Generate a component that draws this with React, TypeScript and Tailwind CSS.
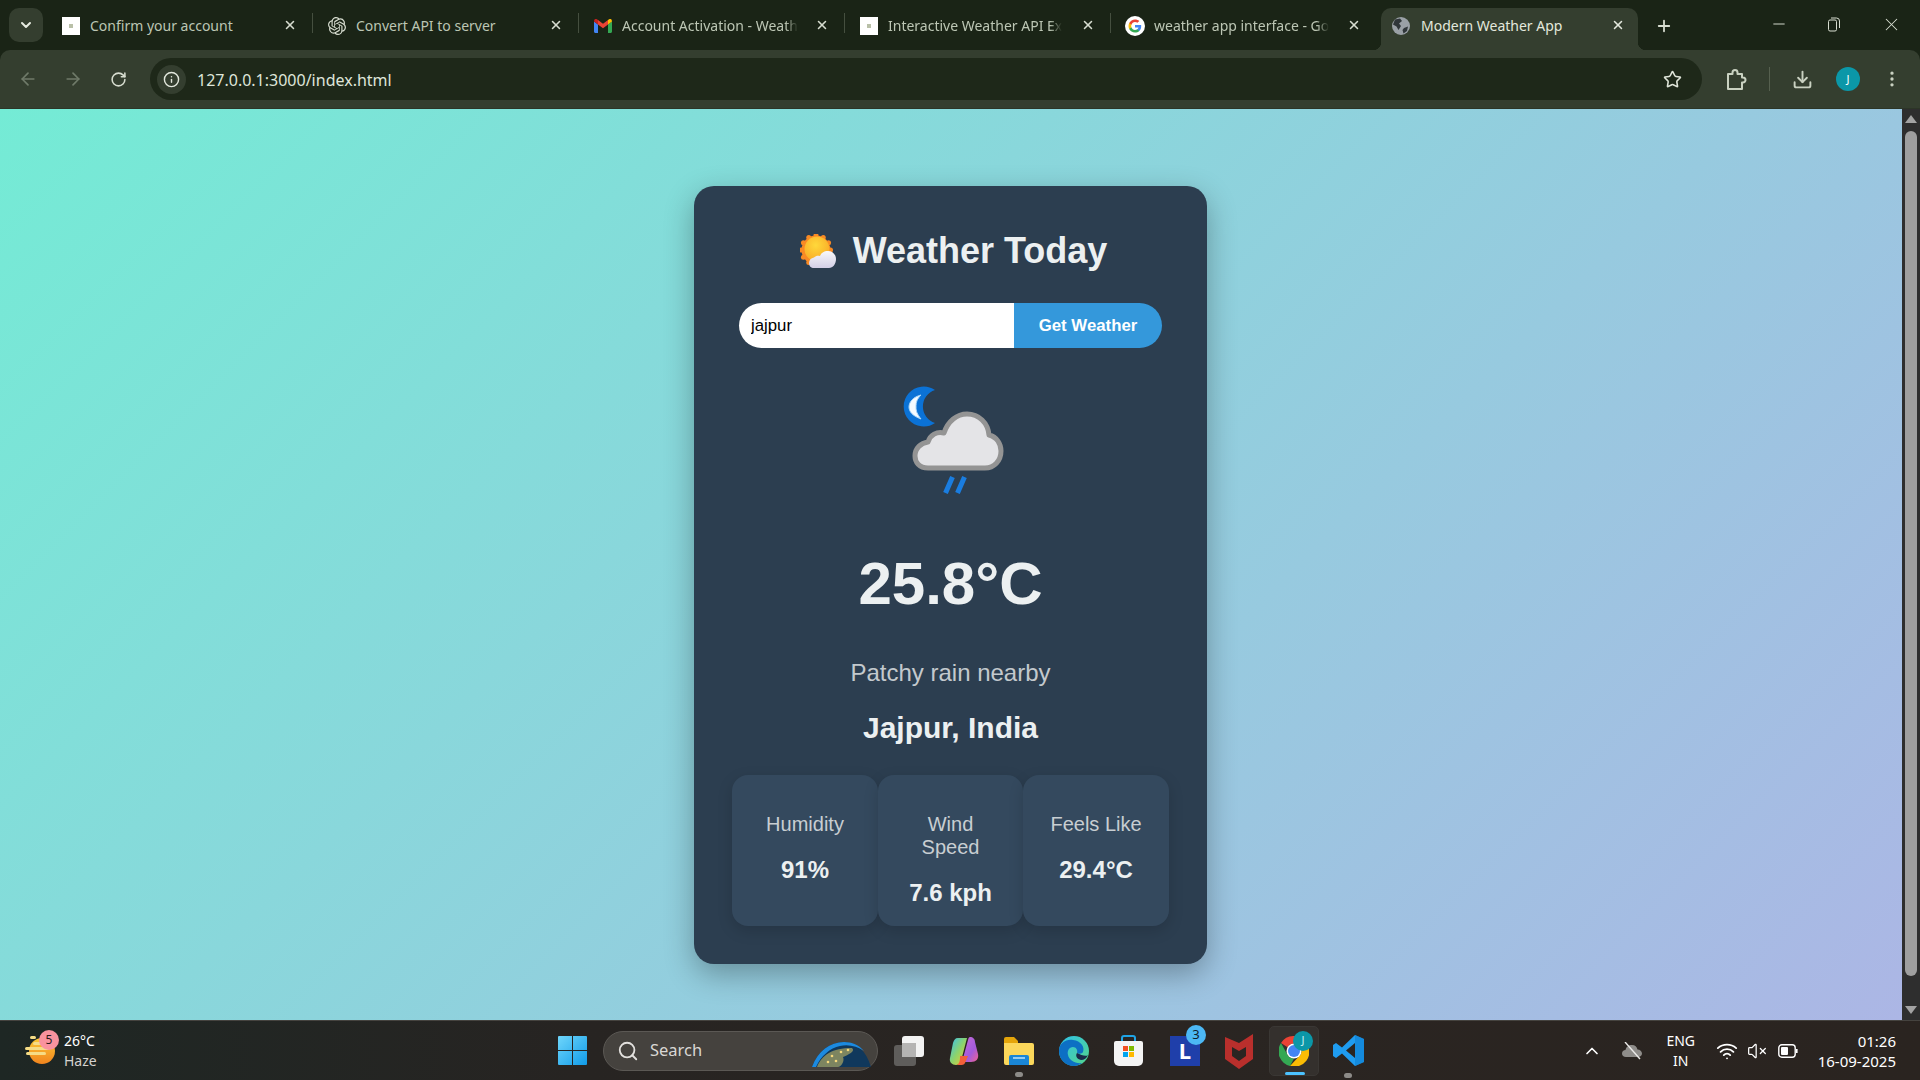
import { ArrowLeft, ArrowRight, ChevronDown, ChevronUp, Download, Info, Minus, MoreVertical, Plus, RotateCw, Search, Star, VolumeX, Wifi, X } from 'lucide-react';
import { SiOpenai } from 'react-icons/si';

const uiFont = "font-['Noto_Sans',sans-serif]";

function BlankFavicon() {
  return (
    <div className="flex h-[18px] w-[18px] items-center justify-center bg-white">
      <div className="h-1 w-1 bg-[#b9c0a8]" />
    </div>
  );
}

function GmailIcon() {
  return (
    <svg width="18" height="14" viewBox="0 0 18 14">
      <path d="M0 2.5V12.5C0 13.3 .6 14 1.5 14H4V5.5Z" fill="#4285f4" />
      <path d="M14 5.5V14H16.5C17.4 14 18 13.3 18 12.5V2.5Z" fill="#34a853" />
      <path d="M0 2.5 4 5.5V1L2.5 0C1 -.5 0 .8 0 2.5Z" fill="#c5221f" />
      <path d="M4 1V5.5L9 9.3 14 5.5V1L9 4.8Z" fill="#ea4335" />
      <path d="M14 1V5.5L18 2.5C18 .8 17 -.5 15.5 0Z" fill="#fbbc04" />
    </svg>
  );
}

function GoogleIcon() {
  return (
    <svg width="20" height="20" viewBox="0 0 20 20">
      <circle cx="10" cy="10" r="10" fill="#fff" />
      <path d="M16.2 10.2c0-.5 0-.9-.1-1.300H10v2.500h3.500c-.2.800-.6 1.500-1.300 1.900v1.600h2.100c1.200-1.100 1.900-2.800 1.900-4.700Z" fill="#4285f4" />
      <path d="M10 16.500c1.800 0 3.200-.6 4.300-1.600l-2.100-1.600c-.6.400-1.300.6-2.200.6-1.700 0-3.100-1.100-3.600-2.700H4.200v1.700c1.100 2.100 3.300 3.600 5.800 3.600Z" fill="#34a853" />
      <path d="M6.400 11.200c-.3-.8-.3-1.600 0-2.400V7.100H4.200c-.9 1.800-.9 4 0 5.800Z" fill="#fbbc05" />
      <path d="M10 5.900c.9 0 1.800.3 2.400.9l1.900-1.900C13.200 3.900 11.700 3.400 10 3.400c-2.500 0-4.700 1.500-5.800 3.700l2.200 1.700C6.900 7.100 8.300 5.900 10 5.900Z" fill="#ea4335" />
    </svg>
  );
}

function GlobeFavicon() {
  return (
    <svg width="18" height="18" viewBox="0 0 18 18">
      <circle cx="9" cy="9" r="9" fill="#9aa0a6" />
      <path d="M3 2.500 8 1.500 10 4 7 6.500 9 9 6.500 13 4.500 9.500 1 7.500ZM12 11 16 9.500 15 14 11.500 16.500 10.500 13Z" fill="#30363a" />
    </svg>
  );
}

function ExtensionIcon() {
  return (
    <svg width="21" height="24" viewBox="0 0 21 24" fill="none" stroke="#c9d1c1" strokeWidth="2" strokeLinejoin="round">
      <path d="M2 7H6.500V5.500a2.500 2.500 0 0 1 5 0V7H16V10.500H17a2.500 2.500 0 0 1 0 5H16V22H2Z" />
    </svg>
  );
}

const tabs = [
  { title: 'Confirm your account', icon: <BlankFavicon /> },
  { title: 'Convert API to server', icon: <SiOpenai className="text-[18px] text-[#d6dccf]" /> },
  { title: 'Account Activation - Weath', icon: <GmailIcon />, fade: true },
  { title: 'Interactive Weather API Ex', icon: <BlankFavicon />, fade: true },
  { title: 'weather app interface - Go', icon: <GoogleIcon />, fade: true },
];

function TabStrip() {
  return (
    <div className={`flex h-[50px] items-end bg-[#1a2416] ${uiFont}`}>
      <div className="flex h-[50px] w-[48px] shrink-0 items-start pl-[9px] pt-[8px]">
        <div className="flex h-[34px] w-[34px] items-center justify-center rounded-[10px] bg-[#343e2f]">
          <ChevronDown size={16} strokeWidth={3} className="text-[#e6ebe0]" />
        </div>
      </div>
      {tabs.map((tab, i) => (
        <div key={tab.title} className="relative flex h-[42px] w-[266px] shrink-0 items-center pb-[7px] pl-[13px]">
          <div className="flex w-[20px] shrink-0 justify-center">{tab.icon}</div>
          <span className={`ml-[9px] whitespace-nowrap text-[14px] text-[#bcc6b4] ${tab.fade ? '[mask-image:linear-gradient(90deg,#000_93%,transparent)]' : ''}`}>
            {tab.title}
          </span>
          <X size={14} strokeWidth={2.6} className="absolute right-[17px] top-[10px] text-[#d7ddd0]" />
          {i < 4 && <div className="absolute right-[1px] top-[5px] h-[20px] w-px bg-[#454f3f]" />}
        </div>
      ))}
      <div className="relative ml-[3px] flex h-[42px] w-[257px] shrink-0 items-center rounded-t-[10px] bg-[#343e2f] pb-[7px] pl-[11px]">
        <div className="absolute bottom-0 left-[-8px] h-2 w-2 bg-[radial-gradient(circle_at_0_0,transparent_8px,#343e2f_8.500px)]" />
        <div className="absolute bottom-0 right-[-8px] h-2 w-2 bg-[radial-gradient(circle_at_100%_0,transparent_8px,#343e2f_8.500px)]" />
        <GlobeFavicon />
        <span className="ml-[11px] whitespace-nowrap text-[14px] text-[#e3e8dd]">Modern Weather App</span>
        <X size={14} strokeWidth={2.6} className="absolute right-[13px] top-[10px] text-[#e3e8dd]" />
      </div>
      <div className="ml-[17px] flex h-[42px] items-center pb-[7px]">
        <Plus size={18} strokeWidth={2.4} className="text-[#d7ddd0]" />
      </div>
      <div className="ml-auto flex h-[50px] items-center pb-[2px] pr-[4px] text-[#d7ddd0]">
        <div className="flex w-[50px] justify-center"><Minus size={18} strokeWidth={1.300} /></div>
        <div className="flex w-[50px] justify-center pl-[10px]">
          <svg width="14" height="15" viewBox="0 0 14 15" fill="none" stroke="currentColor" strokeWidth="1">
            <rect x="1.500" y="3" width="8" height="11" rx="1.500" />
            <path d="M4 1h5.500a3 3 0 0 1 3 3V11" />
          </svg>
        </div>
        <div className="flex w-[62px] justify-center pl-[12px]"><X size={21} strokeWidth={1.200} /></div>
      </div>
    </div>
  );
}

function Toolbar() {
  return (
    <div className={`flex h-[58px] items-center rounded-t-[10px] bg-[#343e2f] ${uiFont}`}>
      <div className="flex w-[150px] shrink-0 items-center pl-[18px]">
        <ArrowLeft size={20} className="text-[#6f7a69]" />
        <ArrowRight size={20} className="ml-[25px] text-[#6f7a69]" />
        <RotateCw size={17} strokeWidth={2.2} className="ml-[27px] text-[#d7ddd0]" />
      </div>
      <div className="flex h-[42px] w-[1552px] shrink-0 items-center rounded-full bg-[#1e2819] pl-[7px] pr-[20px]">
        <div className="flex h-[29px] w-[29px] items-center justify-center rounded-full bg-[#343e2f]">
          <Info size={17} className="text-[#e3e8dd]" />
        </div>
        <span className="ml-[11px] pt-[2px] text-[16px] text-[#dfe5d9]">127.0.0.1:3000/index.html</span>
        <Star size={19} strokeWidth={2} className="ml-auto text-[#dfe5d9]" />
      </div>
      <div className="ml-[24px]"><ExtensionIcon /></div>
      <div className="ml-[22px] h-[24px] w-px bg-[#56604f]" />
      <Download size={21} strokeWidth={2.2} className="ml-[22px] text-[#c9d1c1]" />
      <div className="ml-[23px] flex h-[24px] w-[24px] items-center justify-center rounded-full bg-[#0b97a8] text-[11px] text-white">J</div>
      <MoreVertical size={20} className="ml-[22px] text-[#c9d1c1]" />
    </div>
  );
}

const sunBumps = Array.from({ length: 12 }, (_, i) => {
  const a = (i * Math.PI) / 6;
  return { x: 16 + 14.5 * Math.cos(a), y: 16 + 14.5 * Math.sin(a) };
});

function SunCloudEmoji() {
  return (
    <svg width="37" height="35" viewBox="0 0 37 35">
      <defs>
        <radialGradient id="sunFill" cx="0.45" cy="0.35" r="0.7">
          <stop offset="0" stopColor="#ffd83b" />
          <stop offset="1" stopColor="#f9a825" />
        </radialGradient>
        <linearGradient id="cloudFill" x1="0" y1="0" x2="0" y2="1">
          <stop offset="0" stopColor="#f8f8fa" />
          <stop offset="1" stopColor="#d3cfe6" />
        </linearGradient>
      </defs>
      <circle cx="16" cy="16" r="14.500" fill="#f98a24" />
      {sunBumps.map(b => (
        <circle key={b.x + '-' + b.y} cx={b.x} cy={b.y} r="2.500" fill="#f98a24" />
      ))}
      <circle cx="17" cy="15" r="12.500" fill="url(#sunFill)" />
      <path d="M14 34C11 34 9 32 9 29 9 26 11 24 14 23.500 16 21.500 18 21.500 20 22 21 19 24 17 28 17 32 17 36 20 36 25 36 30 33 34 29 34Z" fill="url(#cloudFill)" />
    </svg>
  );
}

function WeatherIcon() {
  return (
    <svg width="120" height="120" viewBox="0 0 120 120" className="blur-[0.5px]">
      <path d="M44 10A20 20 0 1 0 44 43 17.300 17.300 0 0 1 44 10Z" fill="#0b72d6" />
      <path d="M30 15C22 17 18 22 18 27 18 32 22 36 30 39 26 34 25 31 25 27 25 22 26 19 30 15Z" fill="#f6fbff" stroke="#a9d6fa" strokeWidth="1" />
      <path d="M37 88C28 88 24 82 24 76 24 68 30 63 37 62 39 55 46 51 53 53 57 41 66 34 76 34 88 34 97 43 98 55 106 57 110 64 110 71 110 81 103 88 94 88Z" fill="#e4e4e7" stroke="#949494" strokeWidth="5" strokeLinejoin="round" />
      <path d="M54.500 113 61.500 97M66.500 113 73.500 97" stroke="#1a7de0" strokeWidth="5" />
    </svg>
  );
}

const stats = [
  { label: 'Humidity', value: '91%', width: 'w-[146px]' },
  { label: 'Wind Speed', value: '7.6 kph', width: 'w-[145px]' },
  { label: 'Feels Like', value: '29.4°C', width: 'w-[146px]' },
];

function WeatherCard() {
  return (
    <div className="h-[778px] w-[513px] rounded-[20px] bg-[#2c3e50] px-[45px] pt-[44px] text-center font-['Liberation_Sans',sans-serif] text-[#ecf0f1] shadow-[0_10px_30px_rgba(0,0,0,0.3)]">
      <h1 className="flex h-[42px] items-center justify-center gap-[16px] pl-[6px] text-[36px] font-bold leading-[42px]">
        <SunCloudEmoji />
        <span>Weather Today</span>
      </h1>
      <div className="mt-[31px] flex h-[45px]">
        <input
          readOnly
          value="jajpur"
          className="min-w-0 flex-1 rounded-l-full bg-white px-[12px] text-[16.800px] text-black outline-none"
        />
        <button type="button" className="w-[148px] rounded-r-full bg-[#3498db] text-[16.800px] font-bold text-white">
          Get Weather
        </button>
      </div>
      <div className="mt-[32px] flex justify-center">
        <WeatherIcon />
      </div>
      <div className="mt-[49px] text-[60px] font-bold leading-[70px]">25.8°C</div>
      <div className="mt-[40px] text-[24px] leading-[28px] text-[#c3c9cd]">Patchy rain nearby</div>
      <div className="mt-[24px] text-[30px] font-bold leading-[33px]">Jajpur, India</div>
      <div className="mx-[-7px] mt-[31px] flex h-[151px]">
        {stats.map(stat => (
          <div key={stat.label} className={`rounded-[16px] bg-[#34495e] px-[20px] pt-[38px] shadow-[0_5px_15px_rgba(0,0,0,0.15)] ${stat.width}`}>
            <div className="text-[20px] leading-[23px] text-[#c8ced2]">{stat.label}</div>
            <div className="mt-[20px] text-[24px] font-bold leading-[28px]">{stat.value}</div>
          </div>
        ))}
      </div>
    </div>
  );
}

function Scrollbar() {
  return (
    <div className="flex w-[18px] shrink-0 flex-col items-center bg-[#2e2e2e] pt-[6px] pb-[6px]">
      <div className="h-0 w-0 border-x-[6px] border-b-[8px] border-x-transparent border-b-[#a3a3a3]" />
      <div className="mb-[30px] mt-[8px] w-[12px] flex-1 rounded-full bg-[#9f9f9f]" />
      <div className="h-0 w-0 border-x-[6px] border-t-[8px] border-x-transparent border-t-[#a3a3a3]" />
    </div>
  );
}

function WindowsLogo() {
  return (
    <svg width="29" height="29" viewBox="0 0 29 29">
      <defs>
        <linearGradient id="winFill" x1="0" y1="0" x2="1" y2="1">
          <stop offset="0" stopColor="#6fd6fb" />
          <stop offset="1" stopColor="#119be8" />
        </linearGradient>
      </defs>
      <path d="M1 0H14V14H0V1a1 1 0 0 1 1-1ZM15 0H28a1 1 0 0 1 1 1V14H15ZM0 15H14V29H1a1 1 0 0 1-1-1ZM15 15H29V28a1 1 0 0 1-1 1H15Z" fill="url(#winFill)" />
    </svg>
  );
}

function CopilotIcon() {
  return (
    <svg width="30" height="30" viewBox="0 0 30 30">
      <defs>
        <linearGradient id="copA" x1="0" y1="0" x2="1" y2="1">
          <stop offset="0" stopColor="#35c1f1" />
          <stop offset="0.5" stopColor="#8ed36a" />
          <stop offset="1" stopColor="#f7c92f" />
        </linearGradient>
        <linearGradient id="copB" x1="0" y1="0" x2="1" y2="1">
          <stop offset="0" stopColor="#c86dd7" />
          <stop offset="0.6" stopColor="#a35bdc" />
          <stop offset="1" stopColor="#f06292" />
        </linearGradient>
      </defs>
      <path d="M9 2H18L12 25C11 28 9 29 7 29 3 29 0 26 1 22L4 7C5 4 6 2 9 2Z" fill="url(#copA)" />
      <path d="M21 1C24 1 26 3 26 6L29 18C30 23 27 26 22 26H13L19 4C19.500 2 20 1 21 1Z" fill="url(#copB)" />
      <path d="M11 20H19L16 27C15 29 13 29 11 29H8C11 27 11 24 11 20Z" fill="#f2603a" />
    </svg>
  );
}

function FolderIcon() {
  return (
    <svg width="30" height="28" viewBox="0 0 30 28">
      <path d="M0 2a2 2 0 0 1 2-2H10L14 4V8H0Z" fill="#e5a50a" />
      <path d="M0 6H28a2 2 0 0 1 2 2V26a2 2 0 0 1-2 2H2a2 2 0 0 1-2-2Z" fill="#fbd75b" />
      <path d="M5 28V20a2 2 0 0 1 2-2H23a2 2 0 0 1 2 2V28Z" fill="#1a86d6" />
      <path d="M9 21H21" stroke="#bfe3fb" strokeWidth="1.500" />
    </svg>
  );
}

function EdgeIcon() {
  return (
    <svg width="30" height="30" viewBox="0 0 30 30">
      <defs>
        <linearGradient id="edgeA" x1="0" y1="0" x2="1" y2="1">
          <stop offset="0" stopColor="#2fc2e8" />
          <stop offset="1" stopColor="#54d48a" />
        </linearGradient>
      </defs>
      <circle cx="15" cy="15" r="15" fill="url(#edgeA)" />
      <path d="M0 15C0 7 7 3 14 4 22 5 26 11 24 16 23 18 20 18 18 17 19 14 17 11 14 11 10 11 8 15 9 19 10 24 16 28 23 27 20 29 18 30 15 30 6 30 0 23 0 15Z" fill="#0d6fc4" />
      <path d="M18 17C16 20 18 23 22 24 25 24 28 22 29 19 27 21 22 19 18 17Z" fill="#1a2a4a" />
    </svg>
  );
}

function StoreIcon() {
  return (
    <svg width="29" height="31" viewBox="0 0 29 31">
      <path d="M8 7V3a2 2 0 0 1 2-2H19a2 2 0 0 1 2 2V7" fill="none" stroke="#1fa4e6" strokeWidth="2" />
      <path d="M2 6H27a2 2 0 0 1 2 2V26a5 5 0 0 1-5 5H5a5 5 0 0 1-5-5V8a2 2 0 0 1 2-2Z" fill="#f4f4f4" />
      <rect x="9" y="11" width="5" height="5" fill="#f25022" />
      <rect x="15" y="11" width="5" height="5" fill="#7fba00" />
      <rect x="9" y="17" width="5" height="5" fill="#00a4ef" />
      <rect x="15" y="17" width="5" height="5" fill="#ffb900" />
    </svg>
  );
}

function McAfeeIcon() {
  return (
    <svg width="28" height="36" viewBox="0 0 28 36">
      <path d="M0 4 14 10 28 1V26L14 36 0 26ZM7 14 14 18 21 14V23L14 28 7 23Z" fill="#b92f2c" fillRule="evenodd" />
    </svg>
  );
}

function ChromeIcon() {
  return (
    <svg width="30" height="30" viewBox="0 0 30 30">
      <path d="M15 0A15 15 0 0 1 28 7.500H15A7.500 7.500 0 0 0 8.500 11.300L2 7A15 15 0 0 1 15 0Z" fill="#ea4335" />
      <path d="M2 7 8.500 18.700A7.500 7.500 0 0 0 15 22.500L11 30A15 15 0 0 1 2 7Z" fill="#34a853" />
      <path d="M28 7.500A15 15 0 0 1 11 30L21.500 18.700A7.500 7.500 0 0 0 21.500 11.300 7.500 7.500 0 0 0 15 7.500Z" fill="#fbbc04" />
      <circle cx="15" cy="15" r="7.500" fill="#fff" />
      <circle cx="15" cy="15" r="6" fill="#4285f4" />
    </svg>
  );
}

function VsCodeIcon() {
  return (
    <svg width="31" height="31" viewBox="0 0 31 31">
      <path d="M22 0 31 4V27L22 31 9 18.500 3 23 0 21V10L3 8 9 12.500ZM22 8 13 15.500 22 23Z" fill="#1f9cf0" fillRule="evenodd" />
      <path d="M22 0 31 4V27L22 31Z M0 0" fill="#0e7fd0" opacity="0.6" />
    </svg>
  );
}

function HazeSun() {
  return (
    <svg width="30" height="30" viewBox="0 0 30 30">
      <defs>
        <linearGradient id="hazeFill" x1="0" y1="0" x2="0" y2="1">
          <stop offset="0" stopColor="#fcc934" />
          <stop offset="1" stopColor="#f1841e" />
        </linearGradient>
      </defs>
      <circle cx="17" cy="15" r="13" fill="url(#hazeFill)" />
      <rect x="5" y="0" width="6" height="3" rx="1.500" fill="#f6dc86" />
      <rect x="8" y="6" width="21" height="3" rx="1.500" fill="#f6dc86" />
      <rect x="0" y="11" width="24" height="3" rx="1.500" fill="#f6dc86" />
      <rect x="1" y="16" width="20" height="3" rx="1.500" fill="#f6dc86" />
    </svg>
  );
}

function Globe() {
  return (
    <svg width="60" height="26" viewBox="0 0 60 26" className="absolute bottom-[2px] right-[5px]">
      <path d="M0 25C6 9 18 0 32 0 45 0 54 9 59 25Z" fill="#10385c" />
      <path d="M0 25C6 9 18 0 32 0 40 0 47 3 52 9 45 4 36 2 28 4 18 6 9 14 4 25Z" fill="#1c8ae0" />
      <path d="M5 25C10 13 20 6 40 6 44 9 36 13 31 15 33 19 29 25 26 25Z" fill="#7d8560" />
      <g fill="#f5d77a">
        <circle cx="20" cy="14" r="1.300" />
        <circle cx="29" cy="10" r="1.300" />
        <circle cx="36" cy="8" r="1.300" />
        <circle cx="16" cy="20" r="1.300" />
        <circle cx="24" cy="19" r="1.300" />
      </g>
    </svg>
  );
}

function Taskbar() {
  return (
    <div className={`flex h-[60px] items-center border-t border-[#45433f] bg-[linear-gradient(90deg,#1e2724,#272422_30%,#2a2522_60%,#2a2420)] text-white ${uiFont}`}>
      <div className="relative flex w-[558px] shrink-0 items-center pl-[25px]">
        <HazeSun />
        <div className="absolute left-[39px] top-[-1px] flex h-5 w-5 items-center justify-center rounded-full bg-[#f9929e] text-[12px] text-[#2a1a1c]">5</div>
        <div className="ml-[9px] text-[14px] leading-[20px]">
          <div>26°C</div>
          <div className="text-[#d4d2cf]">Haze</div>
        </div>
      </div>
      <WindowsLogo />
      <div className="relative ml-[16px] flex h-[40px] w-[275px] shrink-0 items-center rounded-full border border-[#5b5854] bg-[#45423e] pl-[13px]">
        <Search size={22} strokeWidth={2} className="text-[#e2e0dd]" />
        <span className="ml-[11px] text-[16.500px] text-[#d9d7d4]">Search</span>
        <Globe />
      </div>
      <div className="relative ml-[16px] h-[30px] w-[30px] shrink-0">
        <div className="absolute bottom-0 left-0 h-[21px] w-[22px] rounded-[3px] bg-[#5f5d5b]" />
        <div className="absolute right-0 top-0 h-[21px] w-[22px] rounded-[3px] bg-[#f3f3f3]" />
        <div className="absolute left-[8px] top-[7px] h-[14px] w-[14px] bg-[#b5b4b3]" />
      </div>
      <div className="ml-[25px] flex shrink-0 items-center gap-[25px]">
        <CopilotIcon />
        <div className="relative">
          <FolderIcon />
          <div className="absolute bottom-[-12px] left-[11px] h-[5px] w-2 rounded-full bg-[#8d8b88]" />
        </div>
        <EdgeIcon />
        <StoreIcon />
        <div className="relative ml-[2px] flex h-[30px] w-[30px] items-center justify-center bg-[#1f3faa] text-[22px] font-bold text-white">
          L
          <div className="absolute right-[-6px] top-[-11px] flex h-5 w-5 items-center justify-center rounded-full bg-[#4cb8f5] text-[13px] font-normal text-[#10202c]">3</div>
        </div>
        <McAfeeIcon />
        <div className="relative ml-[-9px] mr-[-11px] flex h-[50px] w-[50px] items-center justify-center rounded-[5px] border border-[#3a3734] bg-[#34302d]">
          <ChromeIcon />
          <div className="absolute right-[5px] top-[4px] flex h-5 w-5 items-center justify-center rounded-full bg-[#0b97a8] text-[11px] text-[#c6eef2]">J</div>
          <div className="absolute bottom-0 left-[15px] h-[3px] w-5 rounded-full bg-[#4cc2ff]" />
        </div>
        <div className="relative">
          <VsCodeIcon />
          <div className="absolute bottom-[-12px] left-[11px] h-[5px] w-2 rounded-full bg-[#8d8b88]" />
        </div>
      </div>
      <div className="ml-auto flex items-center pr-[24px]">
        <ChevronUp size={20} strokeWidth={2} className="text-white" />
        <svg width="20" height="18" viewBox="0 0 20 18" className="ml-[20px]">
          <path d="M4 15C1.500 15 0 13.500 0 11.500 0 9.500 1.500 8 3.500 8 4 5 6.500 3 10 3 13 3 15 5 15.500 7.500 18 7.500 20 9.500 20 11.500 20 13.500 18 15 16 15Z" fill="#8f8d8a" />
          <path d="M3 0 18 17" stroke="#ecebe9" strokeWidth="1.400" />
        </svg>
        <div className="ml-[19px] w-[40px] text-center text-[14px] leading-[20px]">
          <div>ENG</div>
          <div>IN</div>
        </div>
        <Wifi size={22} strokeWidth={2} className="ml-[15px]" />
        <VolumeX size={20} strokeWidth={1.500} className="ml-[9px]" />
        <svg width="20" height="14" viewBox="0 0 20 14" fill="none" className="ml-[11px]">
          <rect x=".8" y=".8" width="16.400" height="12.400" rx="3" stroke="#fff" strokeWidth="1.400" />
          <rect x="3" y="3" width="7" height="8" rx="1" fill="#fff" />
          <path d="M18.800 5v4" stroke="#fff" strokeWidth="1.600" />
        </svg>
        <div className="ml-[20px] text-right text-[15px] leading-[20px]">
          <div>01:26</div>
          <div>16-09-2025</div>
        </div>
      </div>
    </div>
  );
}

export default function App() {
  return (
    <div className="flex h-[1080px] w-[1920px] flex-col overflow-hidden bg-[#1a2416]">
      <TabStrip />
      <Toolbar />
      <div className="flex h-[912px] border-t border-[#2c3527]">
        <main className="flex flex-1 items-start justify-center bg-[linear-gradient(135deg,#74ebd5,#acb6e5)] pr-[1px] pt-[77px]">
          <WeatherCard />
        </main>
        <Scrollbar />
      </div>
      <Taskbar />
    </div>
  );
}
